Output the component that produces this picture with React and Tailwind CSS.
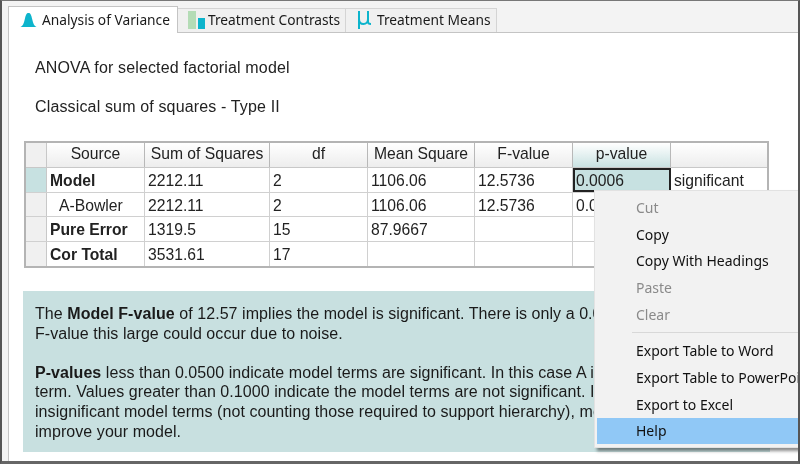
const arial = { fontFamily: '"Liberation Sans", Arial, sans-serif' };
const rows = [
  ["Model", "2212.11", "2", "1106.06", "12.5736", "0.0006", "significant", true],
  ["A-Bowler", "2212.11", "2", "1106.06", "12.5736", "0.0006", "", false],
  ["Pure Error", "1319.5", "15", "87.9667", "", "", "", true],
  ["Cor Total", "3531.61", "17", "", "", "", "", true],
];
const heads = ["Source", "Sum of Squares", "df", "Mean Square", "F-value", "p-value", ""];
const widths = ["w-[98px]", "w-[125px]", "w-[98px]", "w-[107px]", "w-[98px]", "w-[98px]", "w-[96px]"];

function Bell() {
  return (
    <svg width="17" height="16" viewBox="0 0 18 16" className="shrink-0">
      <path d="M0.5 15.5C3 14.5 4 12 5 7.5C6 2.5 7 0.5 9 0.5C11 0.5 12 2.5 13 7.5C14 12 15 14.5 17.5 15.5Z" fill="#0db4cc" />
    </svg>
  );
}
function Bars() {
  return (
    <svg width="17" height="19" viewBox="0 0 17 19" className="shrink-0">
      <rect x="0" y="0" width="8" height="18" fill="#b4dcb6" />
      <rect x="10" y="7" width="7" height="11" fill="#0db4cc" />
    </svg>
  );
}
function Mu() {
  return (
    <svg width="15" height="20" viewBox="0 0 15 20" className="shrink-0 -mt-[2px]" fill="none" stroke="#0db4cc" strokeWidth="2">
      <path d="M2 1V19" />
      <path d="M2 9C2 12.5 4 14 6.5 14C9 14 11 12 11 9V1" />
      <path d="M11 9V12C11 13.5 12 14 14 14" />
    </svg>
  );
}

function Tab({ active, icon, label, width, gap }) {
  return active ? (
    <div className={`${width} h-[27px] -mb-px z-10 flex items-center gap-[5px] pl-[11px] bg-white border border-b-0 border-[#c4c4c4] text-[13.75px] whitespace-nowrap text-[#1a1a1a]`}>
      {icon}<span>{label}</span>
    </div>
  ) : (
    <div className={`${width} ${gap} h-[24px] flex items-center bg-[#f0f0f0] border border-b-0 border-l-0 border-[#d4d4d4] text-[13.75px] whitespace-nowrap text-[#1a1a1a]`}>
      {icon}<span>{label}</span>
    </div>
  );
}

function MenuItem({ label, disabled, active }) {
  return (
    <div className={`h-[26.7px] pl-[39px] flex items-center whitespace-nowrap text-[14px] ${active ? "bg-[#90c8f6] text-[#111]" : disabled ? "text-[#8a8a8a]" : "text-[#111]"}`}>
      {label}
    </div>
  );
}

export default function App() {
  return (
    <div className="relative w-[800px] h-[464px] overflow-hidden bg-[#f3f3f3] border-t border-t-[#777] border-x-2 border-x-[#555] border-b-[3px] border-b-[#666] blur-[0.35px]" style={{ fontFamily: '"Noto Sans", sans-serif' }}>
      <div className="pl-[6px] pt-[5px]">
        <div className="flex items-end h-[27px] border-b border-[#c4c4c4]">
          <Tab active width="w-[170px]" icon={<Bell />} label="Analysis of Variance" />
          <Tab width="w-[168px]" gap="gap-[3px] pl-[10px]" icon={<Bars />} label="Treatment Contrasts" />
          <Tab width="w-[151px]" gap="gap-[5px] pl-[11px]" icon={<Mu />} label="Treatment Means" />
        </div>
        <div className="h-[428px] bg-white border-l border-[#c4c4c4]" style={arial}>
          <div className="pl-[14px] pr-[2px] pt-[25px] text-[#222]">
            <div className="pl-[12px] h-[20px] leading-[20px] text-[16px] tracking-[0.15px]">ANOVA for selected factorial model</div>
            <div className="pl-[12px] mt-[19px] h-[20px] leading-[20px] text-[16px] tracking-[0.15px]">Classical sum of squares - Type II</div>

            <div className="ml-[1px] mt-[24px] w-[745px] border-2 border-[#b4b4b4] text-[15.7px]">
              <div className="flex h-[25px] bg-gradient-to-b from-white to-[#ededed] border-b border-[#c8c8c8]">
                <div className="w-[21px] shrink-0 bg-[#f0f0f0] border-r border-[#c8c8c8]" />
                {heads.map((h, i) => (
                  <div key={i} className={`${widths[i]} shrink-0 pb-[2px] flex items-center justify-center border-r last:border-r-0 border-[#b8b8b8] ${h === "p-value" ? "bg-gradient-to-b from-white to-[#c9e2e2]" : ""}`}>{h}</div>
                ))}
              </div>
              {rows.map((r, ri) => (
                <div key={ri} className="flex h-[24.5px] border-b last:border-b-0 border-[#d0d0d0]">
                  <div className={`w-[21px] shrink-0 border-r border-[#c8c8c8] ${ri === 0 ? "bg-[#c7e1e1]" : "bg-[#f0f0f0]"}`} />
                  {r.slice(0, 7).map((c, i) => {
                    const selected = ri === 0 && i === 5;
                    return (
                      <div key={i} className={`${widths[i]} shrink-0 pt-[3px] flex items-center whitespace-nowrap ${i === 0 ? (r[7] ? "font-bold pl-[3px]" : "pl-[12px]") : "pl-[3px]"} ${selected ? "bg-[#c7e1e1] outline-2 -outline-offset-2 outline-[#222]" : i === 6 ? "" : "border-r border-[#d0d0d0]"}`}>{c}</div>
                    );
                  })}
                </div>
              ))}
            </div>

            <div className="mt-[23px] w-[747px] h-[161px] overflow-hidden bg-[#c8e0e0] pl-[12px] pt-[13px] text-[16px] leading-[19.6px] tracking-[0.06px] whitespace-nowrap text-[#1a1a1a]">
              <div>The <b>Model F-value</b> of 12.57 implies the model is significant. There is only a 0.06% chance that an</div>
              <div>F-value this large could occur due to noise.</div>
              <div className="mt-[19.6px]"><b>P-values</b> less than 0.0500 indicate model terms are significant. In this case A is a significant model</div>
              <div>term. Values greater than 0.1000 indicate the model terms are not significant. If there are many</div>
              <div>insignificant model terms (not counting those required to support hierarchy), model reduction may</div>
              <div>improve your model.</div>
            </div>
          </div>
        </div>
      </div>

      <div className="absolute left-[592px] top-[189px] w-[220px] h-[258px] bg-[#f2f2f2] border border-[#e2e2e2] pt-[3px] pl-[2px] shadow-[3px_3px_3px_rgba(0,0,0,0.45)]">
        <MenuItem label="Cut" disabled />
        <MenuItem label="Copy" />
        <MenuItem label="Copy With Headings" />
        <MenuItem label="Paste" disabled />
        <MenuItem label="Clear" disabled />
        <div className="ml-[35px] my-[4.5px] border-t border-[#d8d8d8]" />
        <MenuItem label="Export Table to Word" />
        <MenuItem label="Export Table to PowerPoint" />
        <MenuItem label="Export to Excel" />
        <MenuItem label="Help" active />
      </div>
    </div>
  );
}
